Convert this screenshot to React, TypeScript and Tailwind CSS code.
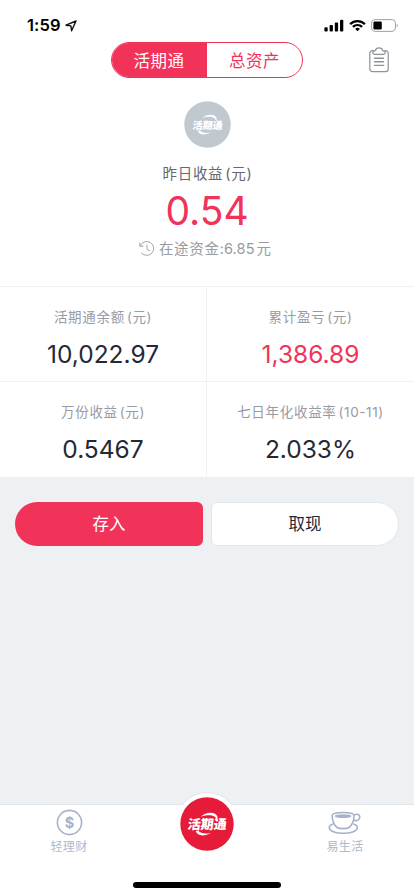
import type { ReactNode } from 'react';

interface Stat {
  label: string;
  note: string;
  value: string;
  highlight?: boolean;
}

const stats: Stat[] = [
  { label: '活期通余额', note: '(元)', value: '10,022.97' },
  { label: '累计盈亏', note: '(元)', value: '1,386.89', highlight: true },
  { label: '万份收益', note: '(元)', value: '0.5467' },
  { label: '七日年化收益率', note: '(10-11)', value: '2.033%' },
];

function StatusBar() {
  return (
    <div className="flex h-[42px] items-start justify-between pl-[27px] pr-[15px]">
      <div className="flex items-center pt-[15px]">
        <span className="text-[16.5px] font-semibold leading-[21px] tracking-[0.1px] text-black">1:59</span>
        <svg className="ml-[4px] mt-px" width="12" height="12" viewBox="0 0 12 12" fill="none" stroke="#111" strokeWidth="1.4" strokeLinejoin="round">
          <path d="M11 1 1 5.2 5.9 5.9 6.6 10.8Z" />
        </svg>
      </div>
      <div className="flex items-center pt-[19px]">
        <svg width="20" height="13" viewBox="0 0 20 13" fill="#000">
          <rect x="0.4" y="8.2" width="3.3" height="4.3" rx="0.9" />
          <rect x="5.6" y="6" width="3.3" height="6.5" rx="0.9" />
          <rect x="10.8" y="3.5" width="3.3" height="9" rx="0.9" />
          <rect x="16" y="0.8" width="3.3" height="11.7" rx="0.9" />
        </svg>
        <svg className="ml-[5px]" width="17" height="13" viewBox="0 0 17 13" fill="none" stroke="#000" strokeWidth="2.2">
          <path d="M1.1 5.1a10.5 10.5 0 0 1 14.8 0" />
          <path d="M3.9 7.9a6.5 6.5 0 0 1 9.2 0" />
          <path d="M8.5 12.2 6.1 9.8a3.5 3.5 0 0 1 4.8 0Z" fill="#000" stroke="none" />
        </svg>
        <svg className="ml-[5px]" width="28" height="13" viewBox="0 0 28 13">
          <rect x="0.6" y="0.6" width="23.8" height="11.8" rx="3.4" fill="none" stroke="#a3a3a3" strokeWidth="1" />
          <rect x="2.4" y="2.4" width="8.4" height="8.2" rx="1.4" fill="#000" />
          <path d="M25.7 4.4v4.2c1.4-.8 1.4-3.4 0-4.2Z" fill="#a3a3a3" />
        </svg>
      </div>
    </div>
  );
}

// Brand mark: slanted wordmark with a swoosh over and under the middle character
function BrandMark({ size, color, textWidth = 39, fontSize = 13 }: { size: number; color: string; textWidth?: number; fontSize?: number }) {
  return (
    <svg width={size} height={size} viewBox="0 0 54 54">
      <circle cx="27" cy="27" r="26.7" fill={color} />
      <path d="M20.7 19.7C26.5 14.4 36 14.6 37.4 19.8c.4 1.7.2 3-.4 4.4 0-4.6-4.9-8.1-16.3-4.5Z" fill="#fff" />
      <path d="M15.6 33.8c1.6 5 7.8 6.2 15.6 2.2-6.3 1.2-10.7.6-12.7-2.2Z" fill="#fff" />
      <g transform="translate(26.8 31.9) skewX(-6)">
        <text x="0" y="0" textAnchor="middle" textLength={textWidth} lengthAdjust="spacingAndGlyphs" fontSize={fontSize} fontWeight="900" fill="#fff">
          活期通
        </text>
      </g>
    </svg>
  );
}

function ClipboardIcon() {
  return (
    <svg width="20" height="26" viewBox="0 0 20 26" fill="none" stroke="#8e929c" strokeWidth="1.2" strokeLinejoin="round" strokeLinecap="round">
      <path d="M4 3.6H3.4A2.6 2.6 0 0 0 .8 6.2v15.9a2.6 2.6 0 0 0 2.6 2.6h13.2a2.6 2.6 0 0 0 2.6-2.6V6.2a2.6 2.6 0 0 0-2.6-2.6H16" />
      <path d="M5.4 7.3c-1 0-1.6-.6-1.6-1.5 0-1.3.9-2.1 2.6-2.2C6.8 1.8 8 .8 10 .8s3.2 1 3.6 2.8c1.7.1 2.6.9 2.6 2.2 0 .9-.6 1.5-1.6 1.5Z" />
      <path d="M5.5 11.2h9M5.5 14.8h9M5.5 18.4h9" strokeWidth="1.4" />
    </svg>
  );
}

function HistoryIcon() {
  return (
    <svg width="16" height="16" viewBox="0 0 16 16" fill="none" stroke="#a3a6ad" strokeWidth="1" strokeLinecap="round" strokeLinejoin="round">
      <path d="M1.2 4.9A7 7 0 1 1 2.6 12.2" />
      <path d="M.8 2v3.2h3.3" />
      <path d="M8 4v4.3l2.8 1.6" />
    </svg>
  );
}

function CoinIcon() {
  return (
    <svg width="27" height="27" viewBox="0 0 27 27">
      <circle cx="13.5" cy="13.5" r="12.1" fill="none" stroke="#a6b1cc" strokeWidth="1.6" />
      <text x="13.5" y="18.7" textAnchor="middle" fontSize="14.5" fontWeight="700" fill="#a6b1cc">
        $
      </text>
    </svg>
  );
}

function CupIcon() {
  return (
    <svg width="34" height="24" viewBox="0 0 34 24" fill="none" stroke="#a6b1cc" strokeWidth="1.6">
      <path d="M4.2 4.2C4.2 2.6 9.1 1.5 15.1 1.5s10.9 1.1 10.9 2.7c0 5.4-1.3 9.5-5 12.3-2.8 1.5-9.1 1.5-11.8 0C5.5 13.7 4.2 9.6 4.2 4.2Z" />
      <ellipse cx="15.1" cy="5.2" rx="8.3" ry="1.9" fill="#a6b1cc" stroke="none" />
      <path d="M26 4.7c1.3-2.2 5.8-2.2 5.8 1.4 0 3-3.1 4.2-6.4 3" />
      <path d="M5.3 13.1c-2.6.8-4 2-4 3.6 0 3.1 5.9 5.6 14 5.6s14-2.5 14-5.6c0-1.6-1.4-2.8-4-3.6" />
    </svg>
  );
}

function StatCell({ stat, className }: { stat: Stat; className: string }) {
  return (
    <div className={`flex flex-col items-center border-[#eff1f3] pt-[20px] ${className}`}>
      <div className="flex h-5 items-center text-[13.5px] text-[#989ba3]">
        <span className="tracking-[0.7px]">{stat.label}</span>
        <span className="ml-[2px] tracking-[0.6px]">{stat.note}</span>
      </div>
      <div className={`mt-[9px] text-[24.5px] leading-[36px] ${stat.highlight ? 'text-[#f23359]' : 'text-[#252936]'}`}>
        {stat.value}
      </div>
    </div>
  );
}

function TabItem({ icon, label }: { icon: ReactNode; label: string }) {
  return (
    <button className="flex w-[138px] flex-col items-center pt-[4px]">
      <span className="flex h-[27px] items-center">{icon}</span>
      <span className="mt-px text-[12px] leading-[19px] tracking-[0.4px] text-[#b0b8ca]">{label}</span>
    </button>
  );
}

export default function App() {
  return (
    <div className="flex h-[896px] w-[414px] flex-col overflow-hidden bg-[#edf1f3] font-[Inter,'Noto_Sans_CJK_SC',sans-serif]">
      <div className="bg-white">
        <StatusBar />
        <div className="grid grid-cols-[111px_192px_1fr] items-center">
          <div />
          <div className="flex h-[36px] overflow-hidden rounded-full border border-[#f23359] text-[16.5px] tracking-[0.5px]">
            <button className="flex w-[95px] items-center justify-center bg-[#f23359] pr-px pt-[3px] text-white">活期通</button>
            <button className="flex flex-1 items-center justify-center pt-[3px] text-[#f23359]">总资产</button>
          </div>
          <div className="pl-[66px]">
            <ClipboardIcon />
          </div>
        </div>

        {/* Yesterday's earnings */}
        <div className="flex h-[208px] flex-col items-center pt-[23px]">
          <BrandMark size={47} color="#c0c8d0" textWidth={34.5} fontSize={11.5} />
          <div className="mt-[14px] flex h-6 items-center pl-px text-[14.5px] text-[#656870]">
            <span className="tracking-[0.7px]">昨日收益</span>
            <span className="ml-[2px] tracking-[0.7px]">(元)</span>
          </div>
          <div className="text-[39px] leading-[50px] text-[#f23359]">0.54</div>
          <div className="mt-px flex h-6 items-center pr-[4px] text-[14.5px] text-[#989ba3]">
            <HistoryIcon />
            <span className="ml-[4px] tracking-[0.7px]">在途资金</span>
            <span className="tracking-[0.1px]">:6.85</span>
            <span className="ml-[2px]">元</span>
          </div>
        </div>

        <div className="grid grid-cols-2 grid-rows-[95px_96px]">
          {stats.map((stat, i) => (
            <StatCell key={stat.label} stat={stat} className={i % 2 === 0 ? 'border-r border-t' : 'border-t'} />
          ))}
        </div>
      </div>

      <div className="flex gap-2 px-[15px] pt-[24.5px] text-[16.5px]">
        <button className="h-[44px] w-[188px] rounded-l-[22px] rounded-r-[6px] bg-[#f23359] pt-px text-white">存入</button>
        <button className="h-[44px] flex-1 rounded-l-[6px] rounded-r-[22px] border border-[#e2e7ec] bg-white pt-px text-[#252936]">取现</button>
      </div>

      <div className="relative mt-auto flex h-[92px] justify-between border-t border-[#e2e6e9] bg-white">
        <TabItem icon={<CoinIcon />} label="轻理财" />
        <button className="absolute left-[175px] top-[-13px] size-[64px] rounded-full border border-[#e2e6e9] bg-white" />
        <div className="absolute inset-x-[160px] top-0 flex h-[70px] justify-center bg-white">
          <div className="-mt-[8px]">
            <BrandMark size={54} color="#e51b39" />
          </div>
        </div>
        <TabItem icon={<CupIcon />} label="易生活" />
        <div className="absolute bottom-[8px] left-[133px] h-[6px] w-[148px] rounded-full bg-black" />
      </div>
    </div>
  );
}
